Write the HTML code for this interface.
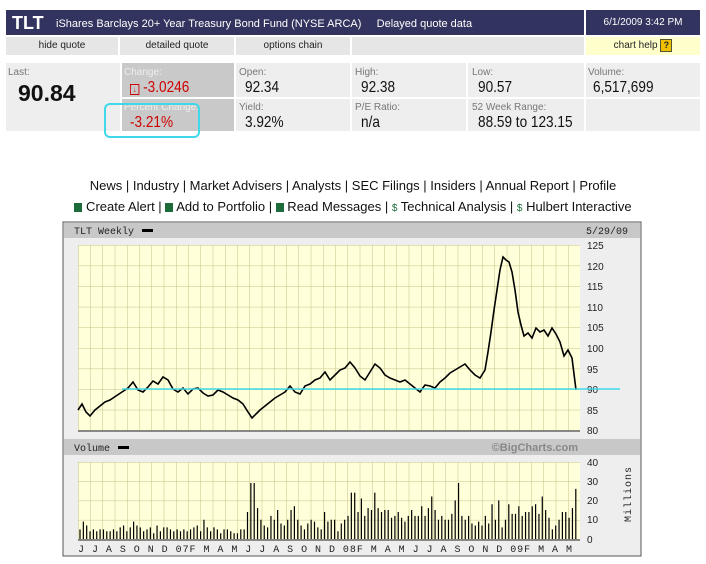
<!DOCTYPE html>
<html><head><meta charset="utf-8"><style>
body{margin:0;background:#fff;width:706px;height:564px;position:relative;font-family:"Liberation Sans",sans-serif;overflow:hidden}
.a{position:absolute}
.lbl{font-size:10px;color:#777}
.val{font-size:16px;color:#111;transform:scaleX(0.85);transform-origin:0 0;white-space:nowrap}
.nav{position:absolute;top:37px;height:18px;background:#e6e6e6;font-size:10px;text-align:center;line-height:18px;color:#222}
.c{position:absolute;background:#eeeeee}
.links{position:absolute;left:0;width:706px;text-align:center;font-size:13px;color:#111}
.ic{display:inline-block;width:8px;height:9px;background:#1d6b3a;vertical-align:-1px}
.dl{color:#1d6b3a;font-size:10px}
</style></head><body>
<div class="a" style="left:6px;top:10px;width:578px;height:25px;background:#33335f"></div>
<div class="a" style="left:12px;top:13px;color:#fff;font-size:18px;font-weight:bold">TLT</div>
<div class="a" style="left:56px;top:18px;color:#fff;font-size:11px">iShares Barclays 20+ Year Treasury Bond Fund (NYSE ARCA) &nbsp;&nbsp;&nbsp; Delayed quote data</div>
<div class="a" style="left:586px;top:10px;width:114px;height:25px;background:#33335f;color:#fff;font-size:10px;text-align:center;line-height:25px">6/1/2009 3:42 PM</div>
<div class="nav" style="left:6px;width:112px">hide quote</div>
<div class="nav" style="left:120px;width:114px">detailed quote</div>
<div class="nav" style="left:236px;width:114px">options chain</div>
<div class="nav" style="left:352px;width:232px"></div>
<div class="nav" style="left:586px;width:114px;background:#ffffcc">chart help <span style="display:inline-block;width:10px;height:11px;background:#f0c000;border:1px solid #553;font-size:9px;line-height:11px;font-weight:bold">?</span></div>

<div class="c" style="left:6px;top:63px;width:114px;height:68px"></div>
<div class="a lbl" style="left:8px;top:67px">Last:</div>
<div class="a" style="left:18px;top:80px;font-size:23px;font-weight:bold;color:#111">90.84</div>
<div class="c" style="left:122px;top:63px;width:112px;height:34px;background:#c9c9c9"></div>
<div class="a lbl" style="left:124px;top:67px;color:#eee">Change:</div>
<div class="a val" style="left:130px;top:79px;color:#c00"><span style="display:inline-block;width:9px;height:9px;border:1px solid #c00;font-size:8px;line-height:9px;text-align:center">↓</span> -3.0246</div>
<div class="c" style="left:122px;top:99px;width:112px;height:32px;background:#c9c9c9"></div>
<div class="a lbl" style="left:124px;top:102px;color:#eee">Percent Change:</div>
<div class="a val" style="left:130px;top:114px;color:#c00">-3.21%</div>
<div class="a" style="left:104px;top:103px;width:92px;height:31px;border:2px solid #3fd8e8;border-radius:6px"></div>

<div class="c" style="left:236px;top:63px;width:114px;height:34px"></div>
<div class="a lbl" style="left:239px;top:67px">Open:</div><div class="a val" style="left:245px;top:79px">92.34</div>
<div class="c" style="left:352px;top:63px;width:114px;height:34px"></div>
<div class="a lbl" style="left:355px;top:67px">High:</div><div class="a val" style="left:361px;top:79px">92.38</div>
<div class="c" style="left:468px;top:63px;width:116px;height:34px"></div>
<div class="a lbl" style="left:472px;top:67px">Low:</div><div class="a val" style="left:478px;top:79px">90.57</div>
<div class="c" style="left:586px;top:63px;width:114px;height:34px"></div>
<div class="a lbl" style="left:588px;top:67px">Volume:</div><div class="a val" style="left:593px;top:79px">6,517,699</div>
<div class="c" style="left:236px;top:99px;width:114px;height:32px"></div>
<div class="a lbl" style="left:239px;top:102px">Yield:</div><div class="a val" style="left:245px;top:114px">3.92%</div>
<div class="c" style="left:352px;top:99px;width:114px;height:32px"></div>
<div class="a lbl" style="left:355px;top:102px">P/E Ratio:</div><div class="a val" style="left:361px;top:114px">n/a</div>
<div class="c" style="left:468px;top:99px;width:116px;height:32px"></div>
<div class="a lbl" style="left:472px;top:102px">52 Week Range:</div><div class="a val" style="left:478px;top:114px">88.59 to 123.15</div>
<div class="c" style="left:586px;top:99px;width:114px;height:32px"></div>

<div class="links" style="top:178px">News | Industry | Market Advisers | Analysts | SEC Filings | Insiders | Annual Report | Profile</div>
<div class="links" style="top:199px"><span class="ic"></span> Create Alert | <span class="ic"></span> Add to Portfolio | <span class="ic"></span> Read Messages | <span class="dl">$</span> Technical Analysis | <span class="dl">$</span> Hulbert Interactive</div>

<svg class="a" style="left:0;top:0" width="706" height="564">
<defs>
<pattern id="g" x="78" y="245" width="12.25" height="20.6" patternUnits="userSpaceOnUse">
<path d="M0,0V20.6M0,0H12.25" stroke="#c6c18a" stroke-width="1" fill="none"/></pattern>
<pattern id="g2" x="78" y="462" width="12.25" height="19.3" patternUnits="userSpaceOnUse">
<path d="M0,0V19.3M0,0H12.25" stroke="#c6c18a" stroke-width="1" fill="none"/></pattern>
</defs>
<rect x="63" y="222" width="578" height="334" fill="#eeeeee" stroke="#555" stroke-width="1"/>
<rect x="64" y="223" width="576" height="15" fill="#c8c8c8"/>
<rect x="64" y="439" width="576" height="16" fill="#c8c8c8"/>
<rect x="78" y="245" width="502" height="186" fill="#ffffd9"/>
<rect x="78" y="245" width="502" height="186" fill="url(#g)"/>
<rect x="78" y="462" width="502" height="78" fill="#ffffd9"/>
<rect x="78" y="462" width="502" height="78" fill="url(#g2)"/>
<path d="M78,431H580M78,540H580" stroke="#666" stroke-width="1.5"/>
<g font-family="Liberation Mono,monospace" font-size="10" fill="#222">
<text x="74" y="234">TLT Weekly</text><rect x="142" y="229" width="11" height="3" fill="#000"/>
<text x="586" y="234">5/29/09</text>
<text x="74" y="451">Volume</text><rect x="118" y="446" width="11" height="3" fill="#000"/>
</g>
<text x="578" y="451" font-family="Liberation Sans,sans-serif" font-size="11" font-weight="bold" fill="#888" text-anchor="end">©BigCharts.com</text>
<g font-family="Liberation Sans,sans-serif" font-size="10" fill="#222">
<text x="587" y="249">125</text><text x="587" y="270">120</text><text x="587" y="290">115</text><text x="587" y="311">110</text><text x="587" y="331">105</text><text x="587" y="352">100</text><text x="587" y="373">95</text><text x="587" y="393">90</text><text x="587" y="414">85</text><text x="587" y="434">80</text>
<text x="587" y="466">40</text><text x="587" y="485">30</text><text x="587" y="504">20</text><text x="587" y="523">10</text><text x="587" y="543">0</text>
</g>
<text transform="translate(631,522) rotate(-90)" font-family="Liberation Mono,monospace" font-size="10" fill="#222" letter-spacing="1">Millions</text>
<text x="78" y="552" font-family="Liberation Mono,monospace" font-size="10" fill="#222" textLength="494" lengthAdjust="spacing" xml:space="preserve">J J A S O N D 07F M A M J J A S O N D 08F M A M J J A S O N D 09F M A M</text>
<polyline fill="none" stroke="#000" stroke-width="1.6" points="78,410 82,404 86,412 90,416 95,410 100,406 105,402 110,400 116,396 122,392 128,388 133,382 138,390 143,392 148,387 153,381 158,384 163,377 168,380 173,389 178,392 183,388 188,394 193,389 198,388 203,393 208,396 213,395 218,390 223,392 228,395 233,398 238,400 243,404 248,412 252,418 256,414 260,410 265,406 270,402 275,398 280,395 285,392 290,386 295,392 300,394 305,386 310,384 315,380 320,378 325,372 330,380 335,375 340,370 345,368 350,362 355,368 360,376 365,380 370,372 375,364 380,368 385,375 390,378 395,380 400,382 405,380 410,384 415,388 420,392 425,385 430,386 435,388 440,382 445,378 450,373 455,370 460,367 465,364 470,370 475,375 480,378 485,370 488,352 491,332 494,310 497,290 500,270 503,257 506,260 509,262 512,272 515,290 518,312 521,325 524,336 528,333 532,338 536,328 540,332 544,330 548,336 552,328 556,334 560,342 564,356 568,350 572,358 575,382 576,390"/>
<path d="M122,389H620" stroke="#3fd8e8" stroke-width="1.5"/>
<g transform="translate(80,539) scale(3.35,-1.93)">
<path vector-effect="non-scaling-stroke" stroke="#000" stroke-width="1.2" fill="none" d="M0,0v5m1,-5v9m1,-9v7m1,-7v4m1,-4v5m1,-5v4m1,-4v5m1,-5v5m1,-5v4m1,-4v4m1,-4v5m1,-5v4m1,-4v6m1,-6v7m1,-7v4m1,-4v6m1,-6v9m1,-9v7m1,-7v6m1,-6v4m1,-4v5m1,-5v6m1,-6v3m1,-3v7m1,-7v4m1,-4v6m1,-6v6m1,-6v5m1,-5v4m1,-4v5m1,-5v4m1,-4v5m1,-5v4m1,-4v5m1,-5v6m1,-6v7m1,-7v4m1,-4v10m1,-10v6m1,-6v4m1,-4v6m1,-6v5m1,-5v3m1,-3v5m1,-5v5m1,-5v4m1,-4v3m1,-3v3m1,-3v5m1,-5v5m1,-5v14m1,-14v29m1,-29v29m1,-29v16m1,-16v10m1,-10v7m1,-7v6m1,-6v12m1,-12v10m1,-10v15m1,-15v8m1,-8v7m1,-7v10m1,-10v15m1,-15v17m1,-17v10m1,-10v7m1,-7v5m1,-5v8m1,-8v10m1,-10v9m1,-9v6m1,-6v5m1,-5v14m1,-14v9m1,-9v10m1,-10v10m1,-10v4m1,-4v8m1,-8v10m1,-10v12m1,-12v24m1,-24v24m1,-24v14m1,-14v21m1,-21v12m1,-12v16m1,-16v15m1,-15v24m1,-24v16m1,-16v14m1,-14v15m1,-15v15m1,-15v11m1,-11v12m1,-12v14m1,-14v11m1,-11v9m1,-9v12m1,-12v15m1,-15v12m1,-12v12m1,-12v17m1,-17v12m1,-12v16m1,-16v22m1,-22v15m1,-15v10m1,-10v12m1,-12v10m1,-10v10m1,-10v13m1,-13v20m1,-20v29m1,-29v12m1,-12v10m1,-10v12m1,-12v8m1,-8v7m1,-7v9m1,-9v7m1,-7v12m1,-12v8m1,-8v18m1,-18v10m1,-10v20m1,-20v6m1,-6v10m1,-10v18m1,-18v13m1,-13v13m1,-13v17m1,-17v12m1,-12v14m1,-14v14m1,-14v17m1,-17v18m1,-18v13m1,-13v22m1,-22v15m1,-15v11m1,-11v5m1,-5v7m1,-7v10m1,-10v14m1,-14v14m1,-14v11m1,-11v16m1,-16v26"/>
</g>
</svg>
</body></html>
